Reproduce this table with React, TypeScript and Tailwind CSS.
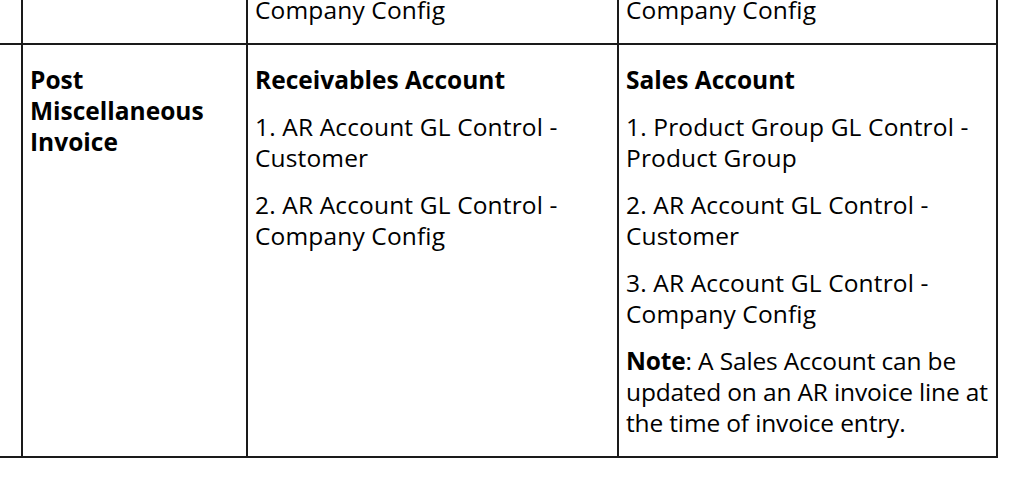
const font = { fontFamily: '"Open Sans", "Noto Sans", sans-serif' };

export default function App() {
  return (
    <div className="min-h-[486px] w-[1017px] bg-white text-black" style={font}>
      <div className="grid w-[998px] grid-cols-[23px_225px_371px_379px] text-[24.5px] leading-[31px] tracking-[0.15px]">
        {/* top row (cut off) */}
        <div className="h-[45px] border-b-2 border-r-2 border-[#1a1a1a]" />
        <div className="h-[45px] border-b-2 border-r-2 border-[#1a1a1a]" />
        <div className="h-[45px] border-b-2 border-r-2 border-[#1a1a1a] pl-[7px]">
          <p className="-mt-[6px]">Company Config</p>
        </div>
        <div className="h-[45px] border-b-2 border-r-2 border-[#1a1a1a] pl-[7px]">
          <p className="-mt-[6px]">Company Config</p>
        </div>

        {/* Post Miscellaneous Invoice */}
        <div className="h-[413px] border-b-2 border-r-2 border-[#1a1a1a]" />
        <div className="border-b-2 border-r-2 border-[#1a1a1a] pl-[7px] pt-[19px] tracking-normal">
          <p className="font-bold">Post Miscellaneous Invoice</p>
        </div>
        <div className="flex flex-col gap-[16px] border-b-2 border-r-2 border-[#1a1a1a] pl-[7px] pt-[19px]">
          <p className="font-bold tracking-normal">Receivables Account</p>
          <p>1. AR Account GL Control - Customer</p>
          <p>2. AR Account GL Control - Company Config</p>
        </div>
        <div className="flex flex-col gap-[16px] border-b-2 border-r-2 border-[#1a1a1a] pl-[7px] pt-[19px]">
          <p className="font-bold tracking-normal">Sales Account</p>
          <p>1. Product Group GL Control - Product Group</p>
          <p>2. AR Account GL Control - Customer</p>
          <p>3. AR Account GL Control - Company Config</p>
          <p className="tracking-[-0.15px]">
            <span className="font-bold">Note</span>: A Sales Account can be updated on an AR invoice line at
            the time of invoice entry.
          </p>
        </div>
      </div>
    </div>
  );
}
